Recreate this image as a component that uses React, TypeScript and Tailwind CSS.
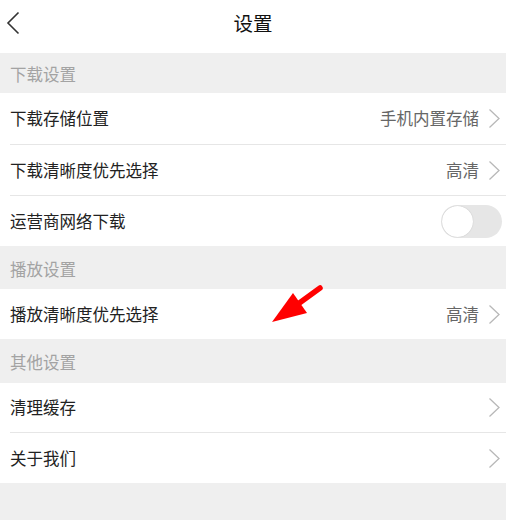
import React from "react";

const font = { fontFamily: '"Noto Sans CJK SC", "Noto Sans", sans-serif' };

function Chevron() {
  return (
    <svg width="13" height="21" viewBox="0 0 13 21" className="shrink-0">
      <path d="M1.5 1.5 L11 10.5 L1.5 19.5" fill="none" stroke="#b8b8b8" strokeWidth="1.3" />
    </svg>
  );
}

function Section({ title, h }: { title: string; h: string }) {
  return (
    <div className={`${h} flex items-center pl-[10px] pt-[3px] text-[16.5px] text-[#a3a3a3] bg-[#efefef]`}>
      {title}
    </div>
  );
}

function Row({
  label,
  value,
  h = "h-[50px]",
  divider = false,
  toggle = false,
}: {
  label: string;
  value?: string;
  h?: string;
  divider?: boolean;
  toggle?: boolean;
}) {
  return (
    <div className="bg-white pl-[10px]">
      <div className={`${h} flex items-center pr-[5px] ${divider ? "border-b border-[#e6e6e6]" : ""}`}>
        <span className="flex-1 text-[16.5px] text-[#222]">{label}</span>
        {toggle ? (
          <div className="w-[61px] h-[33px] rounded-full bg-[#e6e6e6] p-[1px] mr-[-1px]">
            <div className="w-[31px] h-[31px] rounded-full bg-white shadow-[0_0_1px_rgba(0,0,0,0.25)]" />
          </div>
        ) : (
          <div className="flex items-center gap-[9px]">
            {value && <span className="text-[16.5px] text-[#666]">{value}</span>}
            <Chevron />
          </div>
        )}
      </div>
    </div>
  );
}

export default function App() {
  return (
    <div className="w-[506px] h-[520px] bg-[#efefef] relative overflow-hidden" style={font}>
      {/* header */}
      <div className="h-[53px] bg-white flex items-center relative">
        <svg width="14" height="24" viewBox="0 0 14 24" className="absolute left-[6px] top-[11px]">
          <path d="M12.5 1.5 L2 12 L12.5 22.5" fill="none" stroke="#333" strokeWidth="1.6" />
        </svg>
        <div className="flex-1 text-center text-[19.5px] text-[#111] pb-[7px]">设置</div>
      </div>

      <Section title="下载设置" h="h-[40px]" />
      <Row label="下载存储位置" value="手机内置存储" h="h-[52px]" divider />
      <Row label="下载清晰度优先选择" value="高清" h="h-[51px]" divider />
      <Row label="运营商网络下载" toggle />

      <Section title="播放设置" h="h-[43px]" />
      <Row label="播放清晰度优先选择" value="高清" />

      <Section title="其他设置" h="h-[44px]" />
      <Row label="清理缓存" h="h-[50px]" divider />
      <Row label="关于我们" />

      {/* red annotation arrow */}
      <svg width="506" height="520" className="absolute left-0 top-0 pointer-events-none">
        <line x1="320" y1="288" x2="298" y2="304" stroke="#ff0000" strokeWidth="5.5" strokeLinecap="round" />
        <polygon points="272,322 293,293 307,313" fill="#ff0000" />
      </svg>
    </div>
  );
}
